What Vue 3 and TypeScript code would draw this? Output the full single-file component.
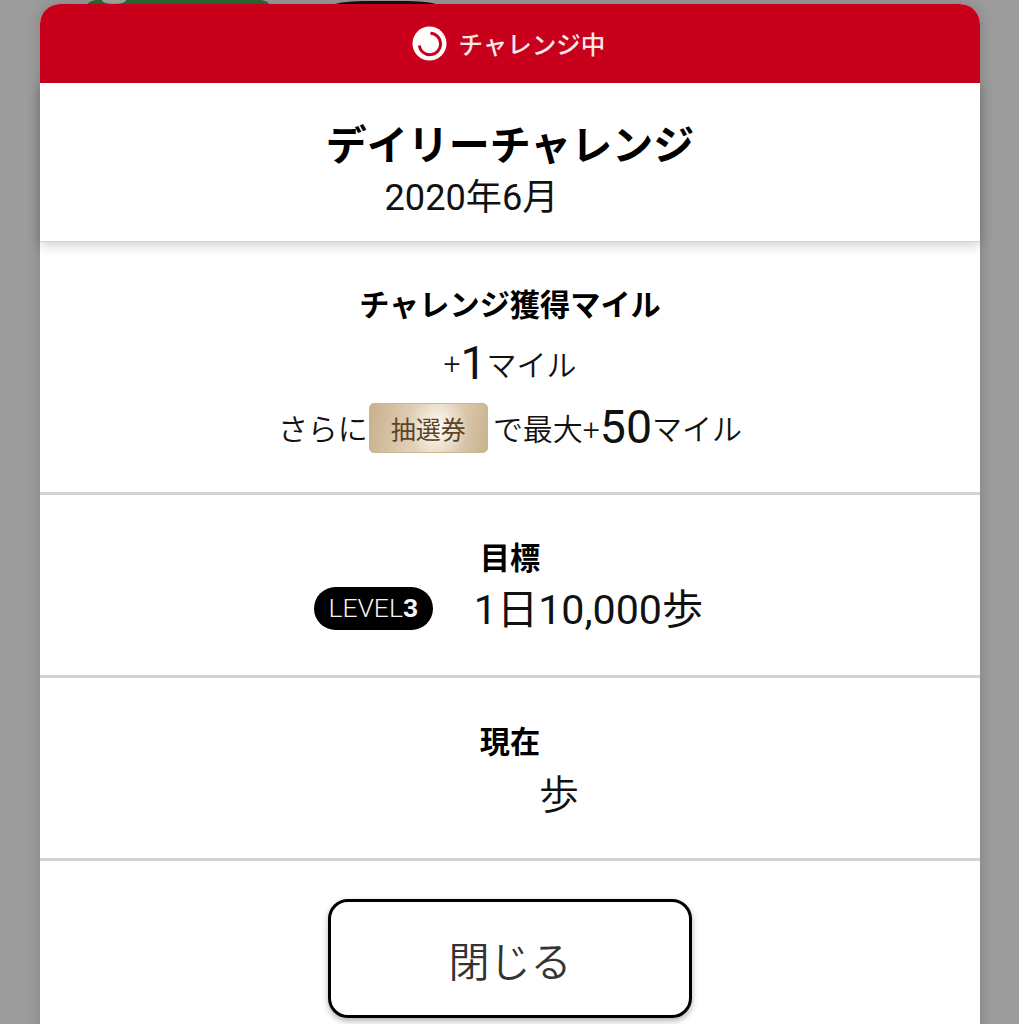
<template>
  <div class="screen">
    <!-- page behind the modal, only its top edge shows -->
    <div class="behind">
      <div class="behind__green"></div>
      <div class="behind__notch"></div>
      <div class="behind__dark"></div>
    </div>

    <section class="modal">
      <header class="modal__status">
        <svg class="status-icon" viewBox="0 0 36 36" aria-hidden="true">
          <circle cx="18" cy="18" r="17.5" fill="#fff" />
          <path d="M19 7.5 A11 11 0 1 1 7.5 20" fill="none" stroke="#c8001c" stroke-width="3" />
        </svg>
        <span>{{ status }}</span>
      </header>

      <div class="modal__title">
        <h1>デイリーチャレンジ</h1>
        <p>{{ period }}</p>
      </div>

      <div class="row row--miles">
        <h2>チャレンジ獲得マイル</h2>
        <p class="miles">+<b>1</b><span class="unit">マイル</span></p>
        <p class="bonus">
          さらに<span class="ticket">抽選券</span>で最大+<b>50</b><span class="unit">マイル</span>
        </p>
      </div>

      <div class="row row--goal">
        <h2>目標</h2>
        <div class="goal">
          <span class="level">LEVEL<b>3</b></span>
          <span>1日10,000歩</span>
        </div>
      </div>

      <div class="row row--now">
        <h2>現在</h2>
        <p class="steps">歩</p>
      </div>

      <div class="modal__foot">
        <button class="close" type="button">閉じる</button>
      </div>
    </section>
  </div>
</template>

<script setup lang="ts">
const status = 'チャレンジ中'
const period = '2020年6月'
</script>

<style>
html,
body {
  margin: 0;
  overflow: hidden;
}
</style>

<style scoped>
.screen {
  position: relative;
  height: 1024px;
  width: 1019px;
  overflow: hidden;
  background: #9c9c9c;
  font-family: Roboto, "Noto Sans CJK JP", sans-serif;
  color: #111;
  box-sizing: border-box;
  padding: 4px 39px 0 40px;
}

.behind__green,
.behind__notch,
.behind__dark {
  position: absolute;
}

.behind__green {
  top: -2px;
  left: 88px;
  width: 181px;
  height: 30px;
  border-radius: 30px 30px 0 0 / 6px 6px 0 0;
  background: #2c6b34;
}

.behind__notch {
  top: -3px;
  left: 102px;
  width: 24px;
  height: 7px;
  border-radius: 50%;
  background: #a4aaa4;
}

.behind__dark {
  top: 1px;
  left: 333px;
  width: 105px;
  height: 20px;
  border-radius: 30px 30px 0 0 / 5px 5px 0 0;
  background: #1c1012;
}

.modal {
  position: relative;
  background: #fff;
  border-radius: 20px 20px 0 0;
  box-shadow: 0 0 14px rgba(0, 0, 0, 0.18);
  height: 1040px;
}

.modal__status {
  height: 79px;
  box-sizing: border-box;
  padding-right: 3px;
  background: #c8001c;
  border-radius: 20px 20px 0 0;
  display: flex;
  align-items: center;
  justify-content: center;
  gap: 12px;
  color: #f8e8ea;
  font-size: 24.5px;
  font-weight: 500;
}

.status-icon {
  width: 35px;
  height: 35px;
}

.modal__title {
  position: relative;
  height: 159px;
  box-sizing: border-box;
  padding-top: 36px;
  text-align: center;
  box-shadow: 0 3px 12px rgba(0, 0, 0, 0.2);
  border-bottom: 1px solid #d4d4d4;
}

h1 {
  margin: 0;
  font-size: 41px;
  line-height: 54px;
  font-weight: 700;
  color: #000;
}

.modal__title p {
  margin: 0;
  padding-right: 77px;
  font-size: 36.2px;
  font-weight: 400;
  line-height: 50px;
}

.row {
  box-sizing: border-box;
  border-bottom: 3px solid #d2d2d2;
  text-align: center;
}

.row--miles {
  height: 253px;
  padding-top: 45px;
}

.row--goal {
  height: 183px;
  padding-top: 46px;
}

.row--now {
  height: 183px;
  padding-top: 47px;
}

h2 {
  margin: 0;
  font-size: 30.2px;
  line-height: 38px;
  font-weight: 700;
  color: #000;
}

.row--goal h2,
.row--now h2 {
  line-height: 36px;
}

.miles,
.bonus {
  margin: 0;
  font-size: 30px;
  font-weight: 350;
  display: flex;
  align-items: center;
  justify-content: center;
}

.miles {
  height: 58px;
  margin-top: 9px;
}

.bonus {
  margin-top: 10px;
  height: 50px;
}

.miles b,
.bonus b {
  font-weight: 400;
}

.miles b {
  font-size: 46px;
}

.bonus b {
  font-size: 46.5px;
}

.ticket {
  box-sizing: border-box;
  width: 119px;
  height: 50px;
  margin: 2px 5px 0 1px;
  display: inline-flex;
  align-items: center;
  justify-content: center;
  border: 1px solid #c9b78f;
  border-radius: 5px;
  font-size: 25px;
  font-weight: 400;
  color: #5b4526;
  background:
    radial-gradient(ellipse 30px 32px at 58% 50%, rgba(255, 252, 246, 0.95), rgba(255, 252, 246, 0)),
    linear-gradient(100deg, #c9b08e 0%, #dfcdb4 35%, #e6d8c3 55%, #dcc9ae 75%, #c8b28d 100%);
}

.goal {
  display: flex;
  align-items: center;
  justify-content: center;
  gap: 41px;
  padding-right: 3px;
  font-size: 41.2px;
  font-weight: 400;
  line-height: 52px;
  margin-top: 7px;
}

.level {
  width: 119px;
  height: 43px;
  margin-bottom: 4px;
  border-radius: 22px;
  background: #000;
  color: #f4f4f4;
  font-size: 26.5px;
  font-weight: 300;
  display: inline-flex;
  align-items: center;
  justify-content: center;
}

.level b {
  font-weight: 700;
}

.steps {
  margin: 2px 0 0;
  padding-left: 98px;
  font-size: 40px;
  font-weight: 350;
  line-height: 66px;
}

.modal__foot {
  display: flex;
  justify-content: center;
  padding-top: 38px;
}

.close {
  width: 364px;
  height: 119px;
  box-sizing: border-box;
  background: #fff;
  border: 3px solid #000;
  border-radius: 20px;
  box-shadow: 0 3px 6px rgba(0, 0, 0, 0.3);
  font: inherit;
  font-size: 41px;
  font-weight: 350;
  color: #333;
}
</style>
